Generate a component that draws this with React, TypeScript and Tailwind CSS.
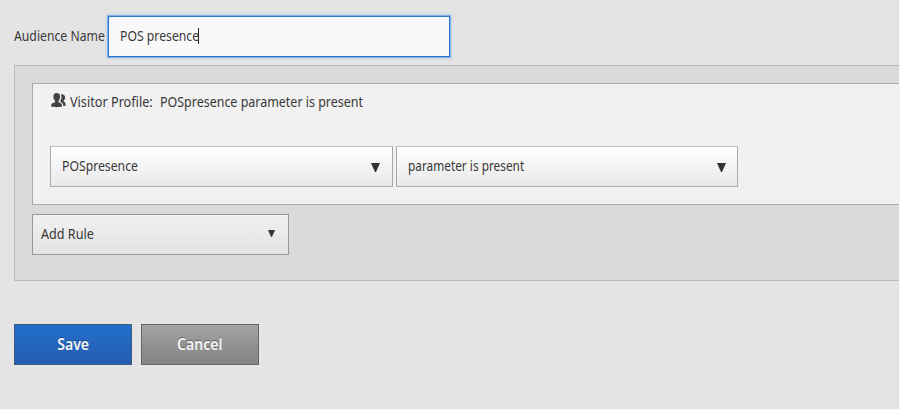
import type { ReactNode } from "react";

function Caret({ className }: { className: string }) {
  return (
    <svg viewBox="0 0 9 9" className={`shrink-0 fill-[#333333] ${className}`}>
      <path d="M0 0H9L5 9H4Z" />
    </svg>
  );
}

function Label({ children, className }: { children: ReactNode; className: string }) {
  return <span className={`block whitespace-pre leading-5 ${className}`}>{children}</span>;
}

function ProfileIcon() {
  return (
    <svg viewBox="0 0 15 15" className="ml-px h-[15px] w-[15px] shrink-0 fill-[#444444]">
      <path d="M5.7 0C8 0 9.2 1.4 9.1 3.8C9 5.8 8.4 6.9 7.6 7.8V9.3L10.2 10.6C11 11.1 11.2 12.3 11 13.6C9 14.4 2.4 14.4 .2 13.6C0 12.3 .2 11.1 1 10.6L4 9.3V7.8C3.1 6.9 2.5 5.8 2.4 3.8C2.3 1.4 3.5 0 5.7 0Z" />
      <path d="M10 1.3C12.6 1 14.3 2.4 14.1 4.8C14 6.2 13.4 7.2 12.7 7.8V8.6L14.1 9.5C14.7 10.2 14.7 11.4 14.4 12.9L12.3 13C12.2 11 11.8 10.4 11.1 9.9L9.4 8.9V8C10.7 6 10.8 3.5 10 1.3Z" />
    </svg>
  );
}

function RuleSelect({ children, className }: { children: ReactNode; className: string }) {
  return (
    <button
      className={`flex h-[41px] items-center justify-between border border-[#aaaaaa] border-t-[#c4c4c4] bg-linear-to-b from-white to-[#e9e9e9] pl-[11px] ${className}`}
    >
      {children}
      <Caret className="mt-[2px] h-[9px] w-[9px]" />
    </button>
  );
}

export default function App() {
  return (
    <div className="h-[410px] w-[900px] overflow-hidden border-r border-b border-[#f5f5f5] bg-[#e4e4e4] pl-[14px] font-['Noto_Sans',sans-serif] text-[14px] text-[#383838]">
      <div className="flex h-[65px] items-start pt-4">
        <div className="w-[94px] shrink-0 pt-[10px]">
          <Label className="origin-left scale-x-[0.873]">Audience Name</Label>
        </div>
        <div className="flex h-[41px] w-[342px] items-center border border-[#2a77cf] bg-[#f9f9f9] pl-[11px] shadow-[0_0_0_1px_#85b0e3,0_0_3px_1px_#a9c8ea]">
          <div className="w-[78px] pb-px">
            <Label className="origin-left scale-x-[0.873]">POS presence</Label>
          </div>
          <span className="mb-px h-4 w-px bg-[#222222]" />
        </div>
      </div>

      <div className="h-[216px] border border-r-0 border-[#bbbbbb] bg-[#dadada] pt-[17px] pl-[17px]">
        <div className="h-[122px] border border-r-0 border-[#aaaaaa] bg-[#f1f1f1] pl-[17px]">
          <div className="flex h-[62px] items-start pt-[8px]">
            <div className="pt-px">
              <ProfileIcon />
            </div>
            <div className="ml-[4px] w-[90px] shrink-0">
              <Label className="origin-left scale-x-[0.905]">Visitor Profile:</Label>
            </div>
            <Label className="origin-left scale-x-[0.89]">POSpresence parameter is present</Label>
          </div>
          <div className="flex gap-[3px]">
            <RuleSelect className="w-[343px] pr-3">
              <Label className="mb-[2px] origin-left scale-x-[0.873]">POSpresence</Label>
            </RuleSelect>
            <RuleSelect className="w-[342px] pr-[11px]">
              <Label className="mb-[2px] origin-left scale-x-[0.845]">parameter is present</Label>
            </RuleSelect>
          </div>
        </div>
        <button className="mt-[9px] flex h-[41px] w-[257px] items-center justify-between border border-[#999999] bg-linear-to-b from-[#f1f1f1] to-[#e2e2e2] pr-[13px] pl-2">
          <Label className="mb-[2px] origin-left scale-x-[0.9]">Add Rule</Label>
          <Caret className="mb-[3px] h-[7px] w-[7px]" />
        </button>
      </div>

      <div className="mt-[43px] flex gap-[9px] text-[16px] font-semibold text-[#f5f5f5]">
        <button className="flex h-[41px] w-[118px] items-center justify-center border border-[#40597e] bg-linear-to-b from-[#236fcb] to-[#245db1] text-shadow-[0_-1px_0_#164b91]">
          <Label className="mb-[2px] origin-center scale-x-[0.88]">Save</Label>
        </button>
        <button className="flex h-[41px] w-[118px] items-center justify-center border border-[#646464] bg-linear-to-b from-[#a3a3a3] to-[#838383] text-shadow-[0_-1px_0_#666666]">
          <Label className="mb-[2px] origin-center scale-x-[0.88]">Cancel</Label>
        </button>
      </div>
    </div>
  );
}
